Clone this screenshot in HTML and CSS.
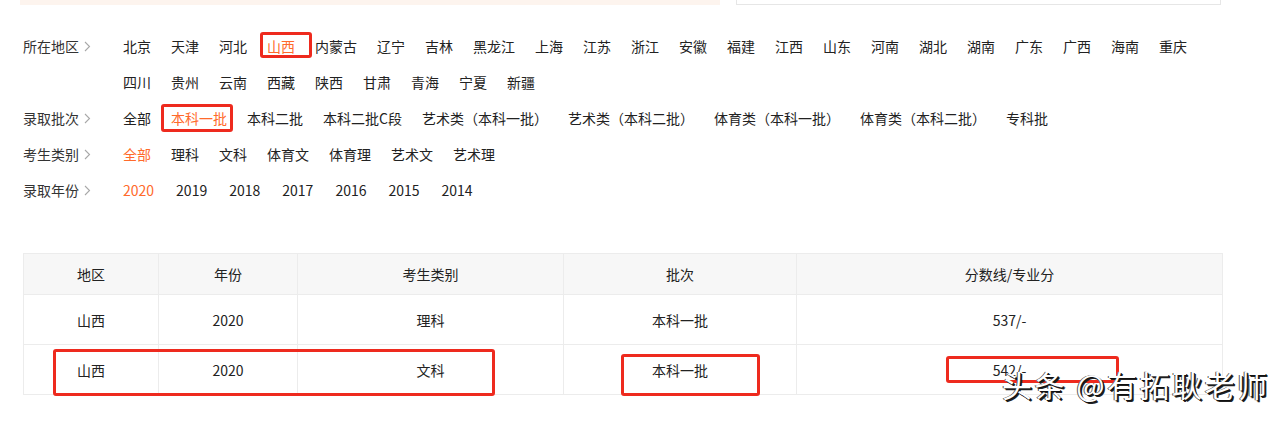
FILE: index.html
```html
<!DOCTYPE html>
<html lang="zh-CN">
<head>
<meta charset="utf-8">
<title>录取分数线</title>
<link rel="stylesheet" href="styles.css">
</head>
<body>
<div class="page">
  <div class="top">
    <div class="peach"></div>
    <div class="boxed"></div>
  </div>

  <div class="filters">
    <div class="frow">
      <div class="flabel">所在地区<svg class="chev" width="7" height="11" viewBox="0 0 7 11"><path d="M1 1 L5.5 5.5 L1 10" fill="none" stroke="#a8a8a8" stroke-width="1.1"/></svg></div>
      <div class="fitems">
        <span class="fitem">北京</span><span class="fitem">天津</span><span class="fitem">河北</span><span class="fitem on">山西</span><span class="fitem">内蒙古</span><span class="fitem">辽宁</span><span class="fitem">吉林</span><span class="fitem">黑龙江</span><span class="fitem">上海</span><span class="fitem">江苏</span><span class="fitem">浙江</span><span class="fitem">安徽</span><span class="fitem">福建</span><span class="fitem">江西</span><span class="fitem">山东</span><span class="fitem">河南</span><span class="fitem">湖北</span><span class="fitem">湖南</span><span class="fitem">广东</span><span class="fitem">广西</span><span class="fitem">海南</span><span class="fitem">重庆</span><span class="fitem">四川</span><span class="fitem">贵州</span><span class="fitem">云南</span><span class="fitem">西藏</span><span class="fitem">陕西</span><span class="fitem">甘肃</span><span class="fitem">青海</span><span class="fitem">宁夏</span><span class="fitem">新疆</span>
      </div>
    </div>
    <div class="frow">
      <div class="flabel">录取批次<svg class="chev" width="7" height="11" viewBox="0 0 7 11"><path d="M1 1 L5.5 5.5 L1 10" fill="none" stroke="#a8a8a8" stroke-width="1.1"/></svg></div>
      <div class="fitems">
        <span class="fitem">全部</span><span class="fitem on">本科一批</span><span class="fitem">本科二批</span><span class="fitem">本科二批C段</span><span class="fitem">艺术类（本科一批）</span><span class="fitem">艺术类（本科二批）</span><span class="fitem">体育类（本科一批）</span><span class="fitem">体育类（本科二批）</span><span class="fitem">专科批</span>
      </div>
    </div>
    <div class="frow">
      <div class="flabel">考生类别<svg class="chev" width="7" height="11" viewBox="0 0 7 11"><path d="M1 1 L5.5 5.5 L1 10" fill="none" stroke="#a8a8a8" stroke-width="1.1"/></svg></div>
      <div class="fitems">
        <span class="fitem on">全部</span><span class="fitem">理科</span><span class="fitem">文科</span><span class="fitem">体育文</span><span class="fitem">体育理</span><span class="fitem">艺术文</span><span class="fitem">艺术理</span>
      </div>
    </div>
    <div class="frow">
      <div class="flabel">录取年份<svg class="chev" width="7" height="11" viewBox="0 0 7 11"><path d="M1 1 L5.5 5.5 L1 10" fill="none" stroke="#a8a8a8" stroke-width="1.1"/></svg></div>
      <div class="fitems years">
        <span class="fitem on">2020</span><span class="fitem">2019</span><span class="fitem">2018</span><span class="fitem">2017</span><span class="fitem">2016</span><span class="fitem">2015</span><span class="fitem">2014</span>
      </div>
    </div>
  </div>

  <table class="score">
    <colgroup>
      <col class="c1"><col class="c2"><col class="c3"><col class="c4"><col class="c5">
    </colgroup>
    <thead>
      <tr><th>地区</th><th>年份</th><th>考生类别</th><th>批次</th><th>分数线/专业分</th></tr>
    </thead>
    <tbody>
      <tr><td>山西</td><td>2020</td><td>理科</td><td>本科一批</td><td>537/-</td></tr>
      <tr><td>山西</td><td>2020</td><td>文科</td><td>本科一批</td><td>542/-</td></tr>
    </tbody>
  </table>

  <div class="mark m1"></div>
  <div class="mark m2"></div>
  <div class="mark m3"></div>
  <div class="mark m4"></div>
  <div class="mark m5"></div>

  <div class="watermark">头条 @有拓耿老师</div>
</div>
</body>
</html>
```

FILE: styles.css
```css
html, body {
  margin: 0;
  padding: 0;
  background: #ffffff;
}

body {
  font-family: "Noto Sans CJK SC", "Microsoft YaHei", sans-serif;
  font-size: 14px;
  color: #333333;
}

.page {
  position: relative;
  width: 1282px;
  height: 422px;
  overflow: hidden;
}

.top {
  display: flex;
  gap: 16px;
  margin-left: 20px;
  width: 1201px;
  height: 5px;
}

.peach {
  width: 700px;
  background: #fdf4ee;
}

.boxed {
  flex: 1;
  border: 1px solid #e6e6e6;
  border-top: none;
}

.filters {
  padding: 23px 0 0 23px;
  width: 1199px;
}

.frow {
  display: flex;
  line-height: 36px;
}

.flabel {
  width: 100px;
  flex-shrink: 0;
  display: flex;
  align-items: center;
  height: 36px;
}

.chev {
  margin-left: 5px;
}

.fitems {
  flex: 1;
  display: flex;
  flex-wrap: wrap;
}

.fitem {
  margin-right: 20px;
  white-space: nowrap;
  color: #222222;
}

.years .fitem {
  margin-right: 22px;
}

.fitem.on {
  color: #ff6a2b;
}

.score {
  margin: 45px 0 0 23px;
  width: 1199px;
  border-collapse: collapse;
  table-layout: fixed;
  border: 1px solid #ececec;
}

.c1 { width: 135px; }
.c2 { width: 139px; }
.c3 { width: 266px; }
.c4 { width: 233px; }
.c5 { width: 426px; }

.score th,
.score td {
  border: 1px solid #ececec;
  text-align: center;
  font-weight: normal;
  color: #222222;
  padding: 0;
}

.score th {
  background: #f7f7f7;
  height: 40px;
}

.score td {
  height: 49px;
}

.mark {
  position: absolute;
  border: 3px solid #ee2a1e;
  border-radius: 3px;
  box-sizing: border-box;
}

.m1 { left: 260px; top: 32px; width: 52px; height: 26px; }
.m2 { left: 161px; top: 104px; width: 72px; height: 28px; }
.m3 { left: 53px; top: 349px; width: 442px; height: 47px; }
.m4 { left: 621px; top: 354px; width: 139px; height: 42px; }
.m5 { left: 946px; top: 356px; width: 173px; height: 27px; }

.watermark {
  position: absolute;
  left: 1002px;
  top: 364px;
  font-size: 30px;
  line-height: 40px;
  letter-spacing: 2.5px;
  white-space: nowrap;
  color: #ffffff;
  text-shadow: 1px 1px 0 #111111, 2px 2px 0 #222222, -1px 0 0 #555555;
}
```
